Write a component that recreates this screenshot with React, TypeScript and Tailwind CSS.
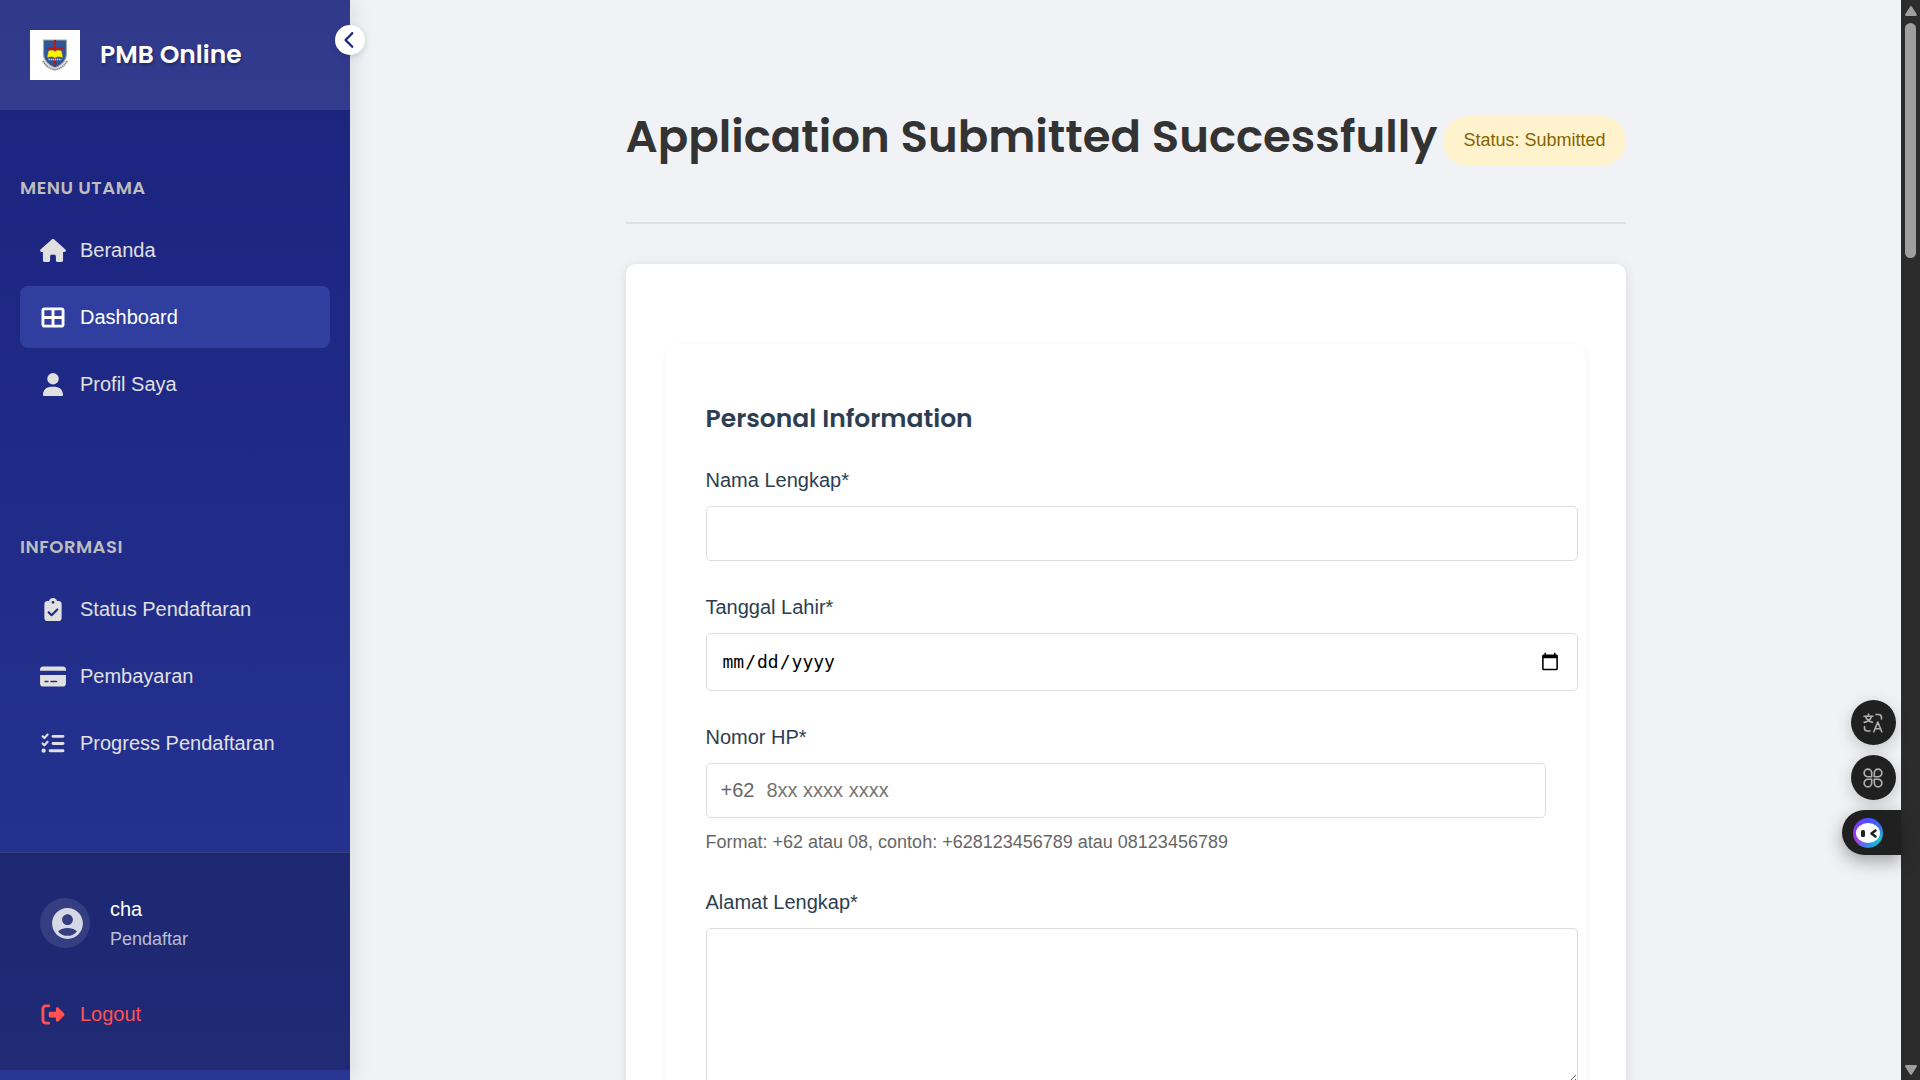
import type { ReactNode } from "react";
import {
  FaChevronLeft,
  FaClipboardCheck,
  FaCreditCard,
  FaHouse,
  FaListCheck,
  FaRightFromBracket,
  FaTableCellsLarge,
  FaUser,
} from "react-icons/fa6";
import { MdAccountCircle } from "react-icons/md";

const heading = "font-[Poppins,Inter,sans-serif]";
const field = "block rounded-[5px] border border-[#dddddd] bg-white px-[15px] text-xl";
const wideField = "w-[calc(100%+32px)]";
const iconCell = "flex w-[26px] shrink-0 justify-center [&>svg]:h-[23px] [&>svg]:w-[26px] [&>svg]:shrink-0";

function Crest() {
  return (
    <svg viewBox="0 0 50 50" className="size-[50px] shrink-0 bg-white" role="img" aria-label="Logo">
      <path d="M13.500 10h23v14c0 7-5 11-11.500 14C18.500 35 13.500 31 13.500 24z" fill="#2f5597" stroke="#a3a9a3" strokeWidth="1.200" />
      <path d="M25 10v26M17 18.500h16" stroke="#b3191f" strokeWidth="2" />
      <path d="M18.500 21c2.500-1 5-.8 6.500.4 1.500-1.200 4-1.400 6.500-.4l1.200 6.500c-3-1-6-.8-7.700.5-1.700-1.300-4.700-1.500-7.700-.5z" fill="#fff200" stroke="#b8a800" strokeWidth=".4" />
      <path d="M18.500 29.500h13" stroke="#c9d2dd" strokeWidth="1.600" strokeDasharray="1.500 .6" />
      <path d="M13 31c3 5 7 8 12 8.500 5-.5 9-3.500 12-8.500" fill="none" stroke="#e4e6e4" strokeWidth="3.400" />
      <path d="M13 31c3 5 7 8 12 8.500 5-.5 9-3.500 12-8.500" fill="none" stroke="#777d7a" strokeWidth="1.800" strokeDasharray="1.200 .9" />
    </svg>
  );
}

function NavItem({ icon, label, active = false }: { icon: ReactNode; label: string; active?: boolean }) {
  return (
    <li>
      <a
        href="#"
        aria-current={active ? "page" : undefined}
        className={
          active
            ? "flex h-[62px] items-center gap-[14px] rounded-[8px] bg-[#303f9f] px-5 text-white"
            : "flex h-[62px] items-center gap-[14px] rounded-[8px] px-5 text-[#e0e0e0]"
        }
      >
        <span className={iconCell}>{icon}</span>
        {label}
      </a>
    </li>
  );
}

function NavSection({ title, children }: { title: string; children: ReactNode }) {
  return (
    <section>
      <h3 className={`${heading} mb-4 text-lg leading-[30px] font-semibold tracking-[0.5px] text-[#bdbdbd]`}>{title}</h3>
      <ul className="flex flex-col gap-[5px]">{children}</ul>
    </section>
  );
}

function Sidebar() {
  return (
    <aside className="relative z-10 flex w-[350px] shrink-0 flex-col bg-linear-to-b from-[#1a237e] to-[#283593] text-xl shadow-[5px_0_19px_rgba(0,0,0,0.08)]">
      <div className="flex h-[110px] shrink-0 items-center gap-5 bg-white/10 px-[30px]">
        <Crest />
        <span className={`${heading} pb-0.5 text-[25px] font-semibold text-white [text-shadow:1px_2px_3px_rgba(0,0,0,0.3)]`}>PMB Online</span>
      </div>
      <button
        type="button"
        aria-label="Collapse sidebar"
        className="absolute top-[25px] -right-[15px] flex size-[30px] items-center justify-center rounded-full bg-white text-[#1a237e] shadow-[0_2px_6px_rgba(0,0,0,0.15)]"
      >
        <FaChevronLeft size={18} />
      </button>
      <nav className="flex flex-1 flex-col gap-[117px] px-5 pt-[63px]">
        <NavSection title="MENU UTAMA">
          <NavItem icon={<FaHouse />} label="Beranda" />
          <NavItem icon={<FaTableCellsLarge />} label="Dashboard" active />
          <NavItem icon={<FaUser />} label="Profil Saya" />
        </NavSection>
        <NavSection title="INFORMASI">
          <NavItem icon={<FaClipboardCheck />} label="Status Pendaftaran" />
          <NavItem icon={<FaCreditCard />} label="Pembayaran" />
          <NavItem icon={<FaListCheck />} label="Progress Pendaftaran" />
        </NavSection>
      </nav>
      <div className="mb-[10px] border-t border-white/10 bg-black/20 px-10 pt-10 pb-[25px]">
        <div className="flex items-center gap-5">
          <span className="flex size-[50px] items-center justify-center rounded-full bg-white/10 pl-1 text-white/80">
            <MdAccountCircle size={37} />
          </span>
          <div>
            <div className="leading-8 text-white">cha</div>
            <div className="text-lg leading-7 text-white/70">Pendaftar</div>
          </div>
        </div>
        <button type="button" className="mt-[30px] flex h-[62px] items-center gap-[14px] text-[#ff5252]">
          <span className={iconCell}>
            <FaRightFromBracket />
          </span>
          Logout
        </button>
      </div>
    </aside>
  );
}

function Field({ id, label, children }: { id: string; label: string; children: ReactNode }) {
  return (
    <div>
      <label htmlFor={id} className="mb-[11px] block text-xl leading-[30px] text-[#2c3e50]">
        {label}
      </label>
      {children}
    </div>
  );
}

function Application() {
  return (
    <main className="min-w-0 flex-1 overflow-hidden px-10 pt-[116px]">
      <div className="mx-auto max-w-[1000px]">
        <header className="mb-10 flex items-start justify-between border-b-2 border-[#dee0e0] pb-14">
          <h1 className={`${heading} text-[45px] leading-[42px] font-semibold whitespace-nowrap text-[#333333]`}>
            Application Submitted Successfully
          </h1>
          <span className="flex h-[50px] shrink-0 items-center rounded-full bg-[#fff3cd] px-5 pb-0.5 text-lg whitespace-nowrap text-[#856404]">
            Status: Submitted
          </span>
        </header>
        <div className="rounded-[10px] bg-white px-10 py-20 shadow-[0_2px_12px_rgba(0,0,0,0.1)]">
          <form className="rounded-[10px] bg-white px-10 pt-[60px] pb-10 shadow-[0_2px_6px_rgba(0,0,0,0.06)]">
            <h2 className={`${heading} mb-[31px] text-[25px] leading-[30px] font-semibold text-[#2c3e50]`}>Personal Information</h2>
            <div className="flex flex-col gap-[31px]">
              <Field id="name" label="Nama Lengkap*">
                <input id="name" type="text" className={`${field} ${wideField} h-[55px]`} />
              </Field>
              <Field id="birth" label="Tanggal Lahir*">
                <input
                  id="birth"
                  type="date"
                  className="block h-[58px] w-[calc(100%+32px)] rounded-[5px] border border-[#dddddd] bg-white px-[15px] font-['DejaVu_Sans_Mono',monospace] text-lg text-black [&::-webkit-calendar-picker-indicator]:size-5"
                />
              </Field>
              <Field id="phone" label="Nomor HP*">
                <div className="flex h-[55px] items-center gap-3 rounded-[5px] border border-[#dddddd] bg-white px-[14px] pb-0.5 text-xl">
                  <span className="text-[#666666]">+62</span>
                  <input id="phone" type="tel" placeholder="8xx xxxx xxxx" className="min-w-0 flex-1 placeholder:text-[#757575]" />
                </div>
                <p className="mt-[10px] text-lg leading-7 text-[#666666]">Format: +62 atau 08, contoh: +628123456789 atau 08123456789</p>
              </Field>
              <Field id="address" label="Alamat Lengkap*">
                <textarea id="address" className={`${field} ${wideField} h-[156px] resize-y`} />
              </Field>
            </div>
          </form>
        </div>
      </div>
    </main>
  );
}

function FloatingTools() {
  const round = "mr-[5px] flex size-[45px] items-center justify-center rounded-full bg-[#202020] pr-0.5 text-[#b0b0b3] shadow-[0_4px_16px_rgba(0,0,0,0.2)]";
  return (
    <div className="absolute top-[700px] right-[19px] z-20 flex flex-col items-end gap-[10px]">
      <button type="button" aria-label="Translate" className={round}>
        <svg viewBox="0 0 20 20" className="size-5" fill="none" stroke="currentColor" strokeWidth="1.600" strokeLinecap="round" strokeLinejoin="round">
          <path d="M1 3.200h9M5.500 1v2.200M2.500 3.200c.8 2.800 3.400 5.300 7 6M8.500 3.200C7.800 6 5 8.600 1.200 9.400" />
          <path d="M13 1.500h2.500a3 3 0 0 1 3 3V6M1.500 13.500v1.500a3 3 0 0 0 3 3H7" />
          <path d="M10.800 18.700 14.800 9l4 9.700M12.200 15.800h5.200" />
        </svg>
      </button>
      <button type="button" aria-label="Apps" className={round}>
        <svg viewBox="0 0 20 20" className="size-5" fill="none" stroke="currentColor" strokeWidth="1.600" strokeLinejoin="round">
          <path d="M8.700 8.700H5A3.800 3.800 0 1 1 8.700 5zM11.300 8.700V5A3.800 3.800 0 1 1 15 8.700zM8.700 11.300V15A3.800 3.800 0 1 1 5 11.300zM11.300 11.300H15A3.800 3.800 0 1 1 11.300 15z" />
        </svg>
      </button>
      <button type="button" aria-label="Assistant" className="flex h-[45px] w-[59px] items-center rounded-l-full bg-[#202020] pl-[11px] shadow-[0_6px_18px_rgba(0,0,0,0.35)]">
        <span className="flex size-[30px] items-center justify-center rounded-full bg-[conic-gradient(#4b50ff,#3b6cf6,#19c4d4,#2f8ff0,#a63be0,#7a3cf5,#4b50ff)]">
          <svg viewBox="0 0 24 24" className="size-6">
            <ellipse cx="12" cy="12" rx="12" ry="10" fill="#ffffff" />
            <rect x="5" y="9" width="4" height="7" rx="1.500" fill="#202020" />
            <path d="m19.500 9.500-4 3 4 3" fill="none" stroke="#202020" strokeWidth="2.600" strokeLinecap="round" strokeLinejoin="round" />
          </svg>
        </span>
      </button>
    </div>
  );
}

function ScrollTrack() {
  return (
    <div aria-hidden="true" className="flex w-[19px] shrink-0 flex-col items-center bg-[#2c2c2c] pt-[6px] pb-[5px]">
      <svg viewBox="0 0 12 10" className="h-[10px] w-3" fill="#9f9f9f">
        <path d="M5 .8a1.200 1.200 0 0 1 2 0l4.700 7.400c.5.800 0 1.800-.9 1.800H1.200C.3 10-.2 9 .3 8.200z" />
      </svg>
      <div className="mt-[7px] h-[235px] w-[11px] rounded-full bg-[#9f9f9f]" />
      <svg viewBox="0 0 12 10" className="mt-auto h-[10px] w-3 rotate-180" fill="#9f9f9f">
        <path d="M5 .8a1.200 1.200 0 0 1 2 0l4.700 7.400c.5.800 0 1.800-.9 1.800H1.200C.3 10-.2 9 .3 8.200z" />
      </svg>
    </div>
  );
}

export default function App() {
  return (
    <div className="relative flex h-screen overflow-hidden bg-[#f0f2f5] font-['Liberation_Sans',Arial,sans-serif]">
      <Sidebar />
      <Application />
      <ScrollTrack />
      <FloatingTools />
    </div>
  );
}
